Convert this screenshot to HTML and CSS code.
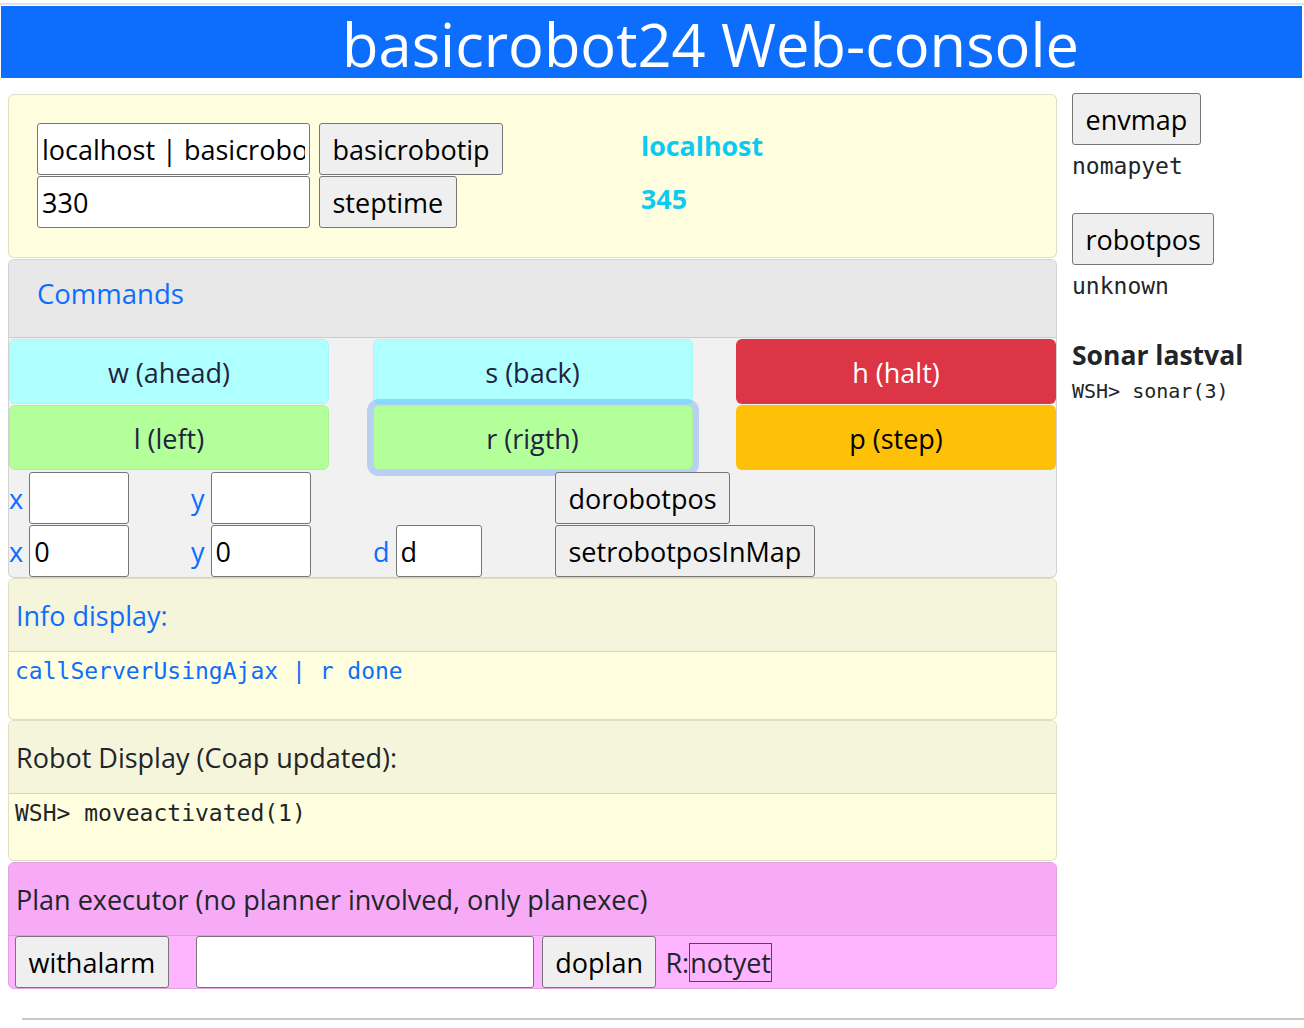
FILE: index.html
```html
<!DOCTYPE html>
<html lang="en">
<head>
<meta charset="utf-8">
<title>basicrobot24 Web-console</title>
<link rel="stylesheet" href="styles.css">
</head>
<body>
<div class="topline"></div>
<header class="banner"><h1 class="banner-title">basicrobot24 Web-console</h1></header>

<main class="layout">
  <section class="main-col">

    <div class="card card-config">
      <div class="config-controls">
        <div class="ctl-row">
          <input class="field field-wide" type="text" value="localhost | basicrobot24">
          <button class="btn" type="button">basicrobotip</button>
        </div>
        <div class="ctl-row">
          <input class="field field-wide" type="text" value="330">
          <button class="btn" type="button">steptime</button>
        </div>
      </div>
      <div class="config-values">
        <div class="cfg-val">localhost</div>
        <div class="cfg-val">345</div>
      </div>
    </div>

    <div class="card card-commands">
      <div class="card-head cmd-head"><h2 class="cmd-title">Commands</h2></div>
      <div class="cmd-body">
        <div class="cmd-grid">
          <button class="cmd cmd-cyan" type="button">w (ahead)</button>
          <button class="cmd cmd-cyan" type="button">s (back)</button>
          <button class="cmd cmd-red" type="button">h (halt)</button>
          <button class="cmd cmd-green" type="button">l (left)</button>
          <button class="cmd cmd-green is-focused" type="button">r (rigth)</button>
          <button class="cmd cmd-yellow" type="button">p (step)</button>
        </div>
        <div class="pos-grid">
          <div class="pos-cell"><label class="pos-label">x</label><input class="field field-sm" type="text"></div>
          <div class="pos-cell"><label class="pos-label">y</label><input class="field field-sm" type="text"></div>
          <div class="pos-cell"></div>
          <div class="pos-cell"><button class="btn" type="button">dorobotpos</button></div>
          <div class="pos-cell"><label class="pos-label">x</label><input class="field field-sm" type="text" value="0"></div>
          <div class="pos-cell"><label class="pos-label">y</label><input class="field field-sm" type="text" value="0"></div>
          <div class="pos-cell"><label class="pos-label">d</label><input class="field field-d" type="text" value="d"></div>
          <div class="pos-cell"><button class="btn" type="button">setrobotposInMap</button></div>
        </div>
      </div>
    </div>

    <div class="card card-info">
      <div class="card-head panel-head"><h3 class="panel-title title-blue">Info display:</h3></div>
      <div class="panel-body"><pre class="mono mono-blue">callServerUsingAjax | r done</pre></div>
    </div>

    <div class="card card-robot">
      <div class="card-head panel-head"><h3 class="panel-title">Robot Display (Coap updated):</h3></div>
      <div class="panel-body panel-body-robot"><pre class="mono">WSH&gt; moveactivated(1)</pre></div>
    </div>

    <div class="card card-plan">
      <div class="card-head panel-head"><h3 class="panel-title">Plan executor (no planner involved, only planexec)</h3></div>
      <div class="plan-body">
        <button class="btn btn-alarm" type="button">withalarm</button>
        <input class="field field-plan" type="text">
        <button class="btn btn-doplan" type="button">doplan</button>
        <span class="plan-result">R:<span class="notyet">notyet</span></span>
      </div>
    </div>

  </section>

  <aside class="side-col">
    <button class="btn" type="button">envmap</button>
    <pre class="mono side-text">nomapyet</pre>
    <button class="btn side-btn" type="button">robotpos</button>
    <pre class="mono side-text">unknown</pre>
    <h4 class="sonar-title">Sonar lastval</h4>
    <pre class="mono sonar-val">WSH&gt; sonar(3)</pre>
  </aside>
</main>

<hr class="foot-rule">
</body>
</html>
```
FILE: styles.css
```css
* { box-sizing: border-box; }

html, body { margin: 0; padding: 0; }

body {
  font-family: "Open Sans", "Noto Sans", sans-serif;
  font-size: 27px;
  line-height: 1.5;
  color: #212529;
  background: #fff;
}

.topline {
  height: 2px;
  margin-top: 3px;
  background: #e2e2e2;
}

.banner {
  margin: 1px 2px 0 1px;
  height: 72px;
  background: #0d6efd;
}

.banner-title {
  margin: 0;
  padding: 4px 0 0 118px;
  font-size: 59.6px;
  font-weight: 500;
  line-height: 68px;
  color: #fff;
  text-align: center;
  white-space: nowrap;
}

.layout {
  display: flex;
  align-items: flex-start;
  gap: 15px;
  margin-top: 15px;
  padding-left: 8px;
}

.main-col {
  flex: none;
  width: 1049px;
  padding-top: 1px;
}

.side-col {
  flex: 1;
  display: flex;
  flex-direction: column;
  align-items: flex-start;
}

/* generic controls */
.field {
  height: 52px;
  padding: 0 4px;
  font: inherit;
  font-size: 27px;
  color: #000;
  background: #fff;
  border: 1px solid #767676;
  border-radius: 3px;
  outline: none;
}

.btn {
  height: 52px;
  padding: 0 12.5px;
  font: inherit;
  font-size: 27px;
  line-height: 1;
  color: #000;
  background: #efefef;
  border: 1px solid #767676;
  border-radius: 3px;
  white-space: nowrap;
  cursor: pointer;
}

.mono {
  margin: 0;
  font-family: "DejaVu Sans Mono", "Liberation Mono", monospace;
  font-size: 23px;
  line-height: 28px;
  color: #212529;
}

/* cards */
.card {
  border: 1px solid rgba(0, 0, 0, 0.125);
  border-radius: 6px;
  overflow: hidden;
}

.card-head {
  border-bottom: 1px solid rgba(0, 0, 0, 0.125);
}

/* config card */
.card-config {
  display: grid;
  grid-template-columns: 604px 1fr;
  margin-bottom: 1px;
  padding: 28px 28px 29px;
  background: #ffffe0;
}

.config-controls {
  display: flex;
  flex-direction: column;
  gap: 1px;
}

.ctl-row {
  display: flex;
  gap: 9px;
}

.field-wide { width: 273px; }

.config-values {
  display: flex;
  flex-direction: column;
  gap: 1px;
  margin-top: -3px;
}

.cfg-val {
  height: 52px;
  line-height: 52px;
  font-size: 26.8px;
  font-weight: 700;
  color: #0dcaf0;
}

/* commands card */
.card-commands { background: #f1f1f1; }

.cmd-head {
  height: 78px;
  padding: 14px 28px 0;
  background: #e8e8e8;
}

.cmd-title {
  margin: 0;
  font-size: 27.5px;
  font-weight: 500;
  line-height: 40px;
  color: #0d6efd;
}

.cmd-body { padding-top: 1px; }

.cmd-grid {
  display: grid;
  grid-template-columns: repeat(3, 320px);
  grid-auto-rows: 65px;
  justify-content: space-between;
  row-gap: 1px;
}

.cmd {
  padding: 3px 0 0;
  font: inherit;
  font-size: 27px;
  line-height: 1.5;
  border: 1px solid transparent;
  border-radius: 6px;
  cursor: pointer;
}

.cmd-cyan { background: #aefffe; border-color: #a8f5f5; color: #1f2340; }
.cmd-green { background: #b3ff99; border-color: #aaf292; color: #1f2340; }
.cmd-red { background: #dc3545; color: #fff; }
.cmd-yellow { background: #ffc107; color: #000; }

.is-focused { box-shadow: 0 0 0 6px rgba(13, 110, 253, 0.25); }

.pos-grid {
  display: grid;
  grid-template-columns: 182px 182px 182px auto;
  grid-auto-rows: 52px;
  row-gap: 1px;
  margin-top: 2px;
}

.pos-cell {
  display: flex;
  align-items: baseline;
  gap: 6px;
}

.pos-label { color: #0d6efd; }

.field-sm { width: 100px; }
.field-d { width: 86px; }

/* info / robot / plan panels */
.card-info, .card-robot { background: #ffffe0; }

.card-robot { margin-bottom: 1px; }

.panel-head {
  height: 73px;
  padding: 17px 7px 0;
  background: #f5f5dc;
}

.panel-title {
  margin: 0;
  font-size: 27px;
  font-weight: 400;
  line-height: 40px;
  color: #212529;
  white-space: nowrap;
}

.title-blue { color: #0d6efd; }

.panel-body {
  height: 67px;
  padding: 5px 6px 0;
}

.panel-body-robot { height: 66px; }

.mono-blue { color: #0d6efd; }

.card-plan {
  background: #feb4fe;
  border-color: #e2a2e0;
}

.card-plan .panel-head {
  background: #f7abf6;
  border-bottom-color: #dc9ada;
}

.plan-body {
  display: flex;
  align-items: center;
  height: 52px;
  padding: 0 6px;
}

.btn-alarm { margin-right: 27px; }

.field-plan {
  width: 338px;
  margin-right: 8px;
}

.btn-doplan { margin-right: 9px; }

.plan-result {
  line-height: normal;
  color: #212529;
}

.notyet { border: 1px solid #ff0000; }

/* side column */
.side-text { margin-top: 7px; }
.side-btn { margin-top: 33px; }

.sonar-title {
  margin: 39px 0 0;
  font-size: 26.5px;
  font-weight: 700;
  line-height: 32px;
  color: #212529;
}

.sonar-val {
  margin-top: 8px;
  font-size: 20px;
  line-height: 24px;
}

.foot-rule {
  height: 2px;
  margin: 29px 0 0 22px;
  border: 0;
  background: #c8c8c8;
}
```
